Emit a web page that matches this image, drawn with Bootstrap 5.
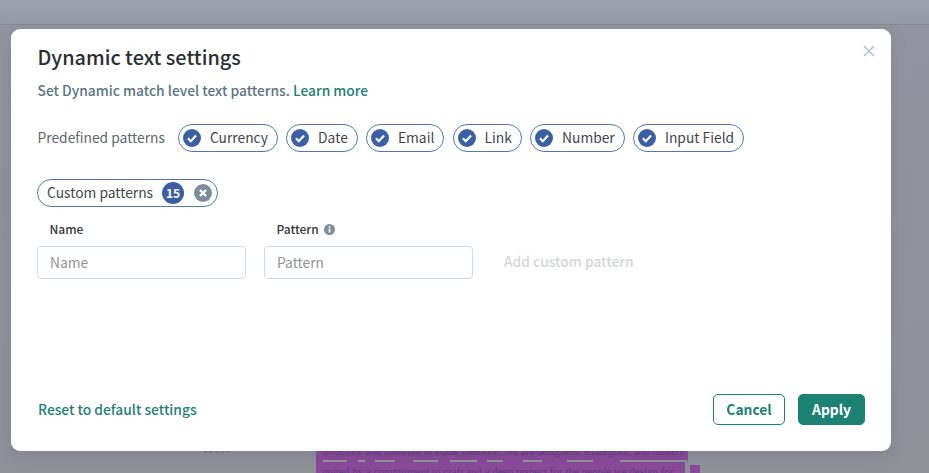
<!DOCTYPE html>
<html lang="en">
<head>
<meta charset="utf-8">
<title>Dynamic text settings</title>
<link href="https://cdn.jsdelivr.net/npm/bootstrap@5.3.0/dist/css/bootstrap.min.css" rel="stylesheet">
<style>
html,body{height:473px;overflow:hidden}
body{font-family:"Noto Sans CJK SC","Liberation Sans",sans-serif;background:#92959f;color:#3b4347}
.page-top{height:25px;background:linear-gradient(180deg,#9da1ad,#979ba6);border-bottom:1px solid #858994}
.page-body{height:448px;background:linear-gradient(180deg,#92959f,#8e9198);padding-top:418px;padding-left:204px;gap:83px}
.about-txt{font:5px/8px "Liberation Sans",sans-serif;letter-spacing:2px;color:#5a5d64;width:29px;flex:none;margin-top:4px}
.hl-wrap{font:11px/14px "Liberation Serif",serif;color:#63397a}
.hl-line{background:#8a4a9a;padding-left:6px;white-space:nowrap}
.hl-a{width:372px;height:17px;padding-top:1px}
.hl-b{width:369px;height:16px;padding-top:2px}
.hl-sq{width:10px;height:10px;background:#8a4a9a;margin-left:5px;margin-top:3px}
.hl-gap{width:372px;height:2px;background:linear-gradient(90deg,#8a4a9a 7px,#92959f 7px 31px,#8a4a9a 31px 42px,#92959f 42px 49px,#8a4a9a 49px 59px,#92959f 59px 79px,#8a4a9a 79px 97px,#92959f 97px 122px,#8a4a9a 122px 134px,#92959f 134px 161px,#8a4a9a 161px 171px,#92959f 171px 187px,#8a4a9a 187px 207px,#92959f 207px 226px,#8a4a9a 226px 251px,#92959f 251px 277px,#8a4a9a 277px 304px,#92959f 304px 371px,#8a4a9a 371px)}
.dlg{position:absolute;left:11px;top:29px;width:880px;height:422px;background:#fff;border-radius:9px;padding:15px 26px 26px 26px;box-shadow:0 4px 18px rgba(60,64,75,.16)}
.dlg-x{position:absolute;right:15px;top:15px;width:14px;height:14px;line-height:0}
.dlg-title{font-size:19.85px;line-height:26px;font-weight:500;color:#2a2e31;margin:0 0 10px .5px}
.dlg-sub{font-size:13.8px;line-height:20px;font-weight:500;color:#5b7583;margin:0 0 24px .5px}
.tealink{color:#1b8274;text-decoration:none;font-weight:500}
.pred-lbl{font-size:13.8px;color:#606669;margin-right:13px;margin-left:.5px;padding-bottom:2px}
.chip{display:inline-flex;align-items:center;height:28px;border:1px solid #4f76bd;border-radius:14px;padding:0 9px 2px 4px;font-size:13.8px;color:#3f4649;background:#fff}
.chip svg{margin-right:9px;margin-top:2px;flex:none}
.chips{gap:8.2px}
.custom-chip{margin-top:27px;padding:0 5px 2px 9px;width:fit-content}
.cnt{background:#3c5ea4;color:#fff;font-size:12px;font-weight:600;width:22px;height:22px;border-radius:11px;display:flex;align-items:center;justify-content:center;margin:2px 10px 0 9px}
.custom-chip svg{margin-right:0}
.fld{width:209px}
.fld-lbl{font-size:12px;line-height:16px;font-weight:500;color:#33383b;margin:14px 0 9px 12.5px;height:16px;display:flex;align-items:center;gap:5px}
.fld-in{height:33px;border:1px solid #cfdbe0;border-radius:4px;font-size:13.8px;padding:0 12px 2px 12px;color:#333}
.fld-in::placeholder{color:#8d9396}
.fields{gap:18px}
.add-btn{font-size:13.8px;font-weight:500;color:#d3d6d7;margin:0 0 0 13px;padding:0 0 2px;background:none;border:0;line-height:31px;height:33px;align-self:flex-end}
.dlg-foot{position:absolute;left:27px;right:26px;bottom:26px}
.reset-lnk{font-size:13.8px}
.btn-c,.btn-a{height:31px;border-radius:5px;font-size:13.8px;font-weight:600;padding:0;line-height:1}
.btn-c{width:72px;border:1px solid #1b8274;color:#1b8274;background:#fff}
.btn-a{width:67px;border:1px solid #1b8274;color:#fff;background:#1b8274;margin-left:5px}
</style>
</head>
<body>
<div class="page-top"></div>
<div class="page-body d-flex">
  <div class="about-txt">ABOUT</div>
  <div class="hl-wrap">
    <div class="hl-line hl-a">Structure and intuition in equal measure. We are designers, strategists, and makers</div>
    <div class="hl-gap"></div>
    <div class="d-flex">
      <div class="hl-line hl-b">united by a commitment to craft and a deep respect for the people we design for.</div>
      <div class="hl-sq"></div>
    </div>
  </div>
</div>

<div class="dlg" role="dialog">
  <div class="dlg-x"><svg width="14" height="14" viewBox="0 0 14 14"><path d="M2 2l10 10M12 2L2 12" stroke="#b4c1c8" stroke-width="1.6" fill="none"/></svg></div>
  <h5 class="dlg-title">Dynamic text settings</h5>
  <p class="dlg-sub">Set Dynamic match level text patterns. <a href="#" class="tealink">Learn more</a></p>
  <div class="d-flex align-items-center">
    <span class="pred-lbl">Predefined patterns</span>
    <div class="d-flex chips">
      <span class="chip"><svg width="18" height="18" viewBox="0 0 19 19"><circle cx="9.5" cy="9.5" r="9.5" fill="#3c5ea4"/><path d="M5.2 9.8l3 3 5.6-6" stroke="#fff" stroke-width="2.2" fill="none"/></svg>Currency</span>
      <span class="chip"><svg width="18" height="18" viewBox="0 0 19 19"><circle cx="9.5" cy="9.5" r="9.5" fill="#3c5ea4"/><path d="M5.2 9.8l3 3 5.6-6" stroke="#fff" stroke-width="2.2" fill="none"/></svg>Date</span>
      <span class="chip"><svg width="18" height="18" viewBox="0 0 19 19"><circle cx="9.5" cy="9.5" r="9.5" fill="#3c5ea4"/><path d="M5.2 9.8l3 3 5.6-6" stroke="#fff" stroke-width="2.2" fill="none"/></svg>Email</span>
      <span class="chip"><svg width="18" height="18" viewBox="0 0 19 19"><circle cx="9.5" cy="9.5" r="9.5" fill="#3c5ea4"/><path d="M5.2 9.8l3 3 5.6-6" stroke="#fff" stroke-width="2.2" fill="none"/></svg>Link</span>
      <span class="chip"><svg width="18" height="18" viewBox="0 0 19 19"><circle cx="9.5" cy="9.5" r="9.5" fill="#3c5ea4"/><path d="M5.2 9.8l3 3 5.6-6" stroke="#fff" stroke-width="2.2" fill="none"/></svg>Number</span>
      <span class="chip"><svg width="18" height="18" viewBox="0 0 19 19"><circle cx="9.5" cy="9.5" r="9.5" fill="#3c5ea4"/><path d="M5.2 9.8l3 3 5.6-6" stroke="#fff" stroke-width="2.2" fill="none"/></svg>Input Field</span>
    </div>
  </div>
  <div class="chip custom-chip d-flex">Custom patterns<span class="cnt">15</span><svg width="18" height="18" viewBox="0 0 19 19"><circle cx="9.5" cy="9.5" r="9.5" fill="#7b8f9b"/><path d="M6.3 6.3l6.4 6.4M12.7 6.3l-6.4 6.4" stroke="#fff" stroke-width="2.4" fill="none"/></svg></div>
  <div class="d-flex fields">
    <div class="fld">
      <div class="fld-lbl">Name</div>
      <input class="form-control fld-in" placeholder="Name" aria-label="Name">
    </div>
    <div class="fld">
      <div class="fld-lbl">Pattern <svg width="11" height="11" viewBox="0 0 11 11"><circle cx="5.5" cy="5.5" r="5.5" fill="#7b8f9b"/><rect x="4.7" y="4.6" width="1.7" height="4" fill="#fff"/><rect x="4.7" y="2.2" width="1.7" height="1.6" fill="#fff"/></svg></div>
      <input class="form-control fld-in" placeholder="Pattern" aria-label="Pattern">
    </div>
    <button class="add-btn" type="button">Add custom pattern</button>
  </div>
  <div class="dlg-foot d-flex justify-content-between align-items-center">
    <a href="#" class="tealink reset-lnk">Reset to default settings</a>
    <div class="d-flex gap-2">
      <button class="btn btn-c" type="button">Cancel</button>
      <button class="btn btn-a" type="button">Apply</button>
    </div>
  </div>
</div>
<script src="https://cdn.jsdelivr.net/npm/bootstrap@5.3.0/dist/js/bootstrap.bundle.min.js"></script>
</body>
</html>
